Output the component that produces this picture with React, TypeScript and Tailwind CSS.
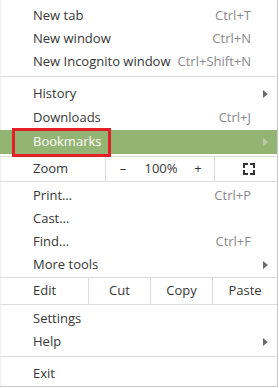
import React from 'react';

const Arrow = ({ light }: { light?: boolean }) => (
  <svg width="5" height="8" viewBox="0 0 5 8" className="absolute right-[9px] top-1/2 -translate-y-1/2">
    <path d="M0 0 L5 4 L0 8 Z" fill={light ? '#b9cda5' : '#6b6b6b'} />
  </svg>
);

const Item = ({ label, shortcut, sub, h = 'h-[23px]' }: { label: string; shortcut?: string; sub?: boolean; h?: string }) => (
  <div className={`relative flex ${h} items-center pl-[33px] pr-[26px]`}>
    <span className="flex-1">{label}</span>
    {shortcut && <span className="text-[#8a8a8a]">{shortcut}</span>}
    {sub && <Arrow />}
  </div>
);

export default function App() {
  return (
    <div className="h-[388px] w-[279px] bg-white">
      <div
        className="h-[387px] w-[278px] border-b border-r border-[#c9c9c9] bg-white text-[13px] text-[#363636]"
        style={{ fontFamily: '"Open Sans", "Noto Sans", sans-serif', boxShadow: 'inset 2px 0 2px -1px rgba(0,0,0,0.08)' }}
      >
        <div className="pt-[4px]">
          <Item label="New tab" shortcut="Ctrl+T" />
          <Item label="New window" shortcut="Ctrl+N" />
          <Item label="New Incognito window" shortcut="Ctrl+Shift+N" />
        </div>
        <div className="mb-[5px] mt-[3px] h-px bg-[#dcdcdc]" />
        <Item label="History" sub h="h-[24px]" />
        <Item label="Downloads" shortcut="Ctrl+J" h="h-[24px]" />
        <div className="relative flex h-[24px] items-center bg-[#94b474] pl-[33px] text-white">
          <span className="absolute left-[12px] top-[-2px] h-[29px] w-[99px] border-[3px] border-[#e3202a]" />
          <span>Bookmarks</span>
          <Arrow light />
        </div>
        <div className="mt-[2px] flex h-[26px] items-center border-y border-[#dcdcdc]">
          <span className="w-[105px] pl-[33px]">Zoom</span>
          <div className="flex h-full w-[110px] items-center border-x border-[#dcdcdc]">
            <span className="w-[34px] text-center">–</span>
            <span className="w-[42px] text-center">100%</span>
            <span className="w-[32px] text-center">+</span>
          </div>
          <div className="flex flex-1 items-center justify-center pl-[6px]">
            <svg width="12" height="12" viewBox="0 0 12 12" fill="none" stroke="#333" strokeWidth="2">
              <path d="M1 4V1h3M8 1h3v3M11 8v3H8M4 11H1V8" strokeLinecap="square" />
            </svg>
          </div>
        </div>
        <div className="pt-[2px]">
          <Item label="Print…" shortcut="Ctrl+P" />
          <Item label="Cast…" />
          <Item label="Find…" shortcut="Ctrl+F" />
          <Item label="More tools" sub />
        </div>
        <div className="mt-[1px] flex h-[28px] items-center border-y border-[#dcdcdc]">
          <span className="w-[88px] pl-[33px]">Edit</span>
          <span className="flex h-full w-[63px] items-center justify-center border-x border-[#dcdcdc]">Cut</span>
          <span className="flex h-full w-[62px] items-center justify-center border-r border-[#dcdcdc]">Copy</span>
          <span className="flex-1 text-center">Paste</span>
        </div>
        <div className="pt-[2px]">
          <Item label="Settings" />
          <Item label="Help" sub />
        </div>
        <div className="mb-[5px] mt-[3px] h-px bg-[#dcdcdc]" />
        <Item label="Exit" />
      </div>
    </div>
  );
}
